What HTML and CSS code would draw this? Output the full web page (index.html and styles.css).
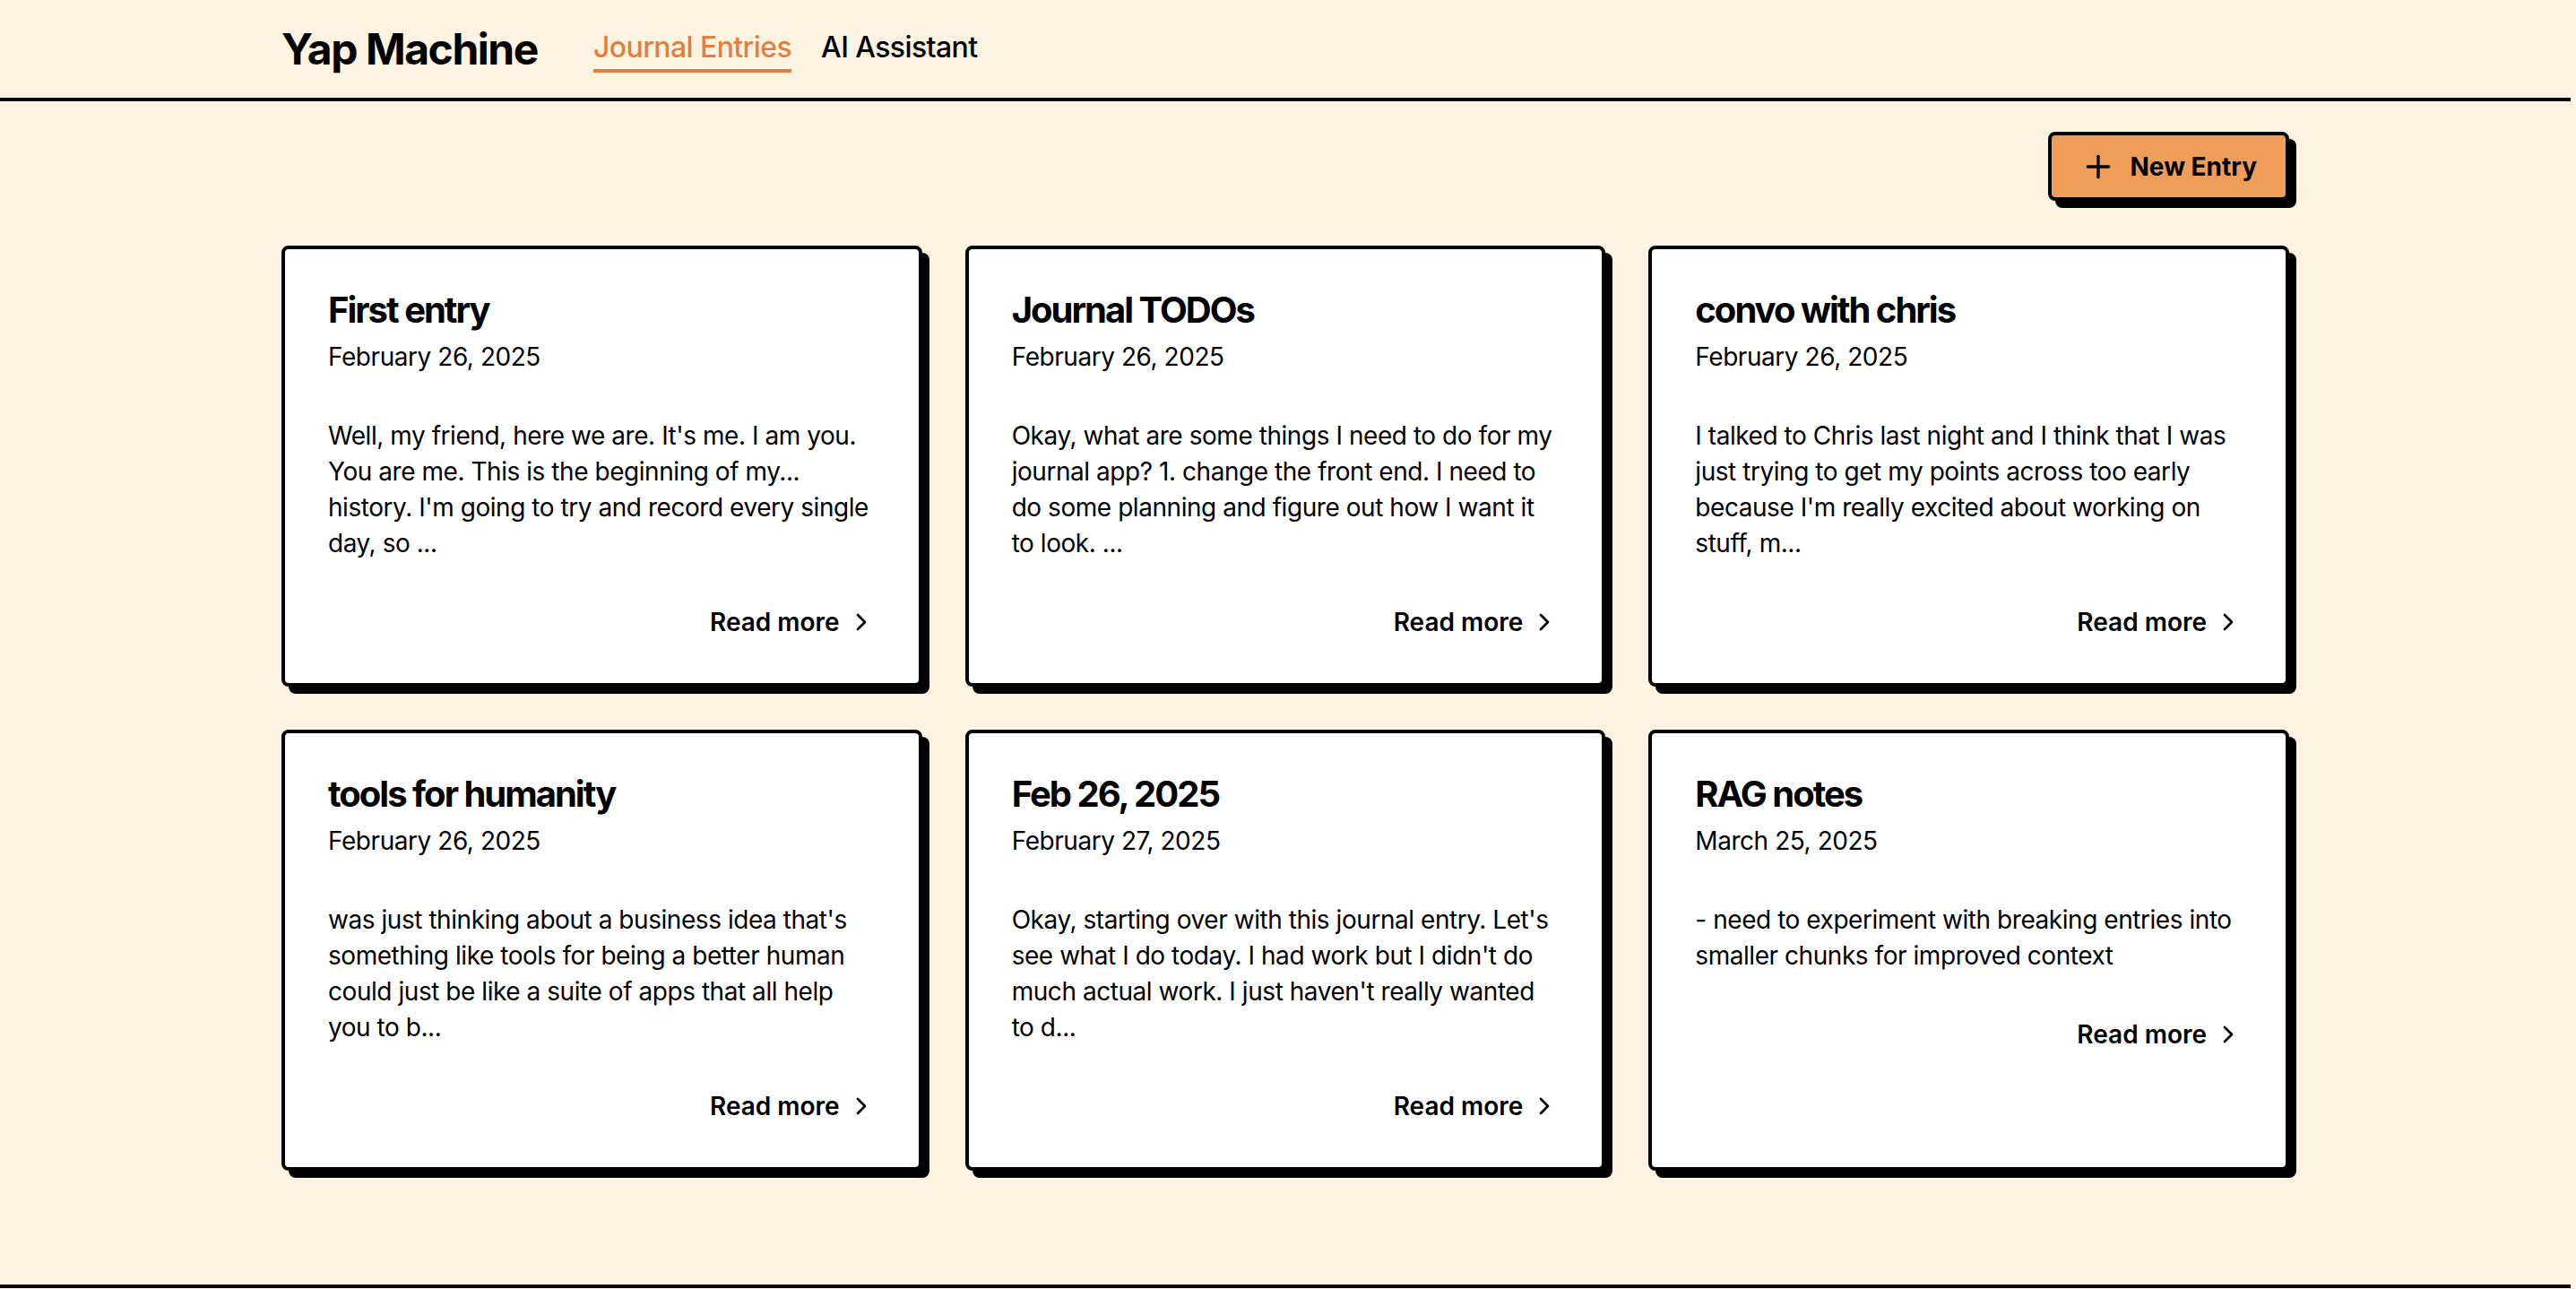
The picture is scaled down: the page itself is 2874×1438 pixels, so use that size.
FILE: index.html
```html
<!DOCTYPE html>
<html lang="en">
<head>
<meta charset="utf-8">
<title>Yap Machine</title>
<link rel="stylesheet" href="styles.css">
</head>
<body>
<header class="site-header">
  <div class="container header-inner">
    <a class="logo" href="#">Yap Machine</a>
    <nav class="nav">
      <a class="nav-link active" href="#">Journal Entries</a>
      <a class="nav-link" href="#">AI Assistant</a>
    </nav>
  </div>
</header>
<main class="main">
  <div class="container">
    <div class="toolbar">
      <button class="btn-new" type="button">
        <svg class="icon-plus" viewBox="0 0 24 24" fill="none" stroke="currentColor" stroke-width="2" stroke-linecap="round" stroke-linejoin="round"><path d="M5 12h14"/><path d="M12 5v14"/></svg>
        <span>New Entry</span>
      </button>
    </div>
    <div class="grid">
      <article class="card">
        <div class="card-header">
          <h3 class="card-title">First entry</h3>
          <p class="card-date">February 26, 2025</p>
        </div>
        <div class="card-content">Well, my friend, here we are. It's me. I am you. You are me. This is the beginning of my... history. I'm going to try and record every single day, so ...</div>
        <div class="card-footer"><a class="read-more" href="#">Read more<svg class="icon-chev" viewBox="0 0 24 24" fill="none" stroke="currentColor" stroke-width="2" stroke-linecap="round" stroke-linejoin="round"><path d="m9 18 6-6-6-6"/></svg></a></div>
      </article>
      <article class="card">
        <div class="card-header">
          <h3 class="card-title">Journal TODOs</h3>
          <p class="card-date">February 26, 2025</p>
        </div>
        <div class="card-content">Okay, what are some things I need to do for my journal app? 1. change the front end. I need to do some planning and figure out how I want it to look. ...</div>
        <div class="card-footer"><a class="read-more" href="#">Read more<svg class="icon-chev" viewBox="0 0 24 24" fill="none" stroke="currentColor" stroke-width="2" stroke-linecap="round" stroke-linejoin="round"><path d="m9 18 6-6-6-6"/></svg></a></div>
      </article>
      <article class="card">
        <div class="card-header">
          <h3 class="card-title">convo with chris</h3>
          <p class="card-date">February 26, 2025</p>
        </div>
        <div class="card-content">I talked to Chris last night and I think that I was just trying to get my points across too early because I'm really excited about working on stuff, m...</div>
        <div class="card-footer"><a class="read-more" href="#">Read more<svg class="icon-chev" viewBox="0 0 24 24" fill="none" stroke="currentColor" stroke-width="2" stroke-linecap="round" stroke-linejoin="round"><path d="m9 18 6-6-6-6"/></svg></a></div>
      </article>
      <article class="card">
        <div class="card-header">
          <h3 class="card-title">tools for humanity</h3>
          <p class="card-date">February 26, 2025</p>
        </div>
        <div class="card-content">was just thinking about a business idea that's something like tools for being a better human could just be like a suite of apps that all help you to b...</div>
        <div class="card-footer"><a class="read-more" href="#">Read more<svg class="icon-chev" viewBox="0 0 24 24" fill="none" stroke="currentColor" stroke-width="2" stroke-linecap="round" stroke-linejoin="round"><path d="m9 18 6-6-6-6"/></svg></a></div>
      </article>
      <article class="card">
        <div class="card-header">
          <h3 class="card-title">Feb 26, 2025</h3>
          <p class="card-date">February 27, 2025</p>
        </div>
        <div class="card-content">Okay, starting over with this journal entry. Let's see what I do today. I had work but I didn't do much actual work. I just haven't really wanted to d...</div>
        <div class="card-footer"><a class="read-more" href="#">Read more<svg class="icon-chev" viewBox="0 0 24 24" fill="none" stroke="currentColor" stroke-width="2" stroke-linecap="round" stroke-linejoin="round"><path d="m9 18 6-6-6-6"/></svg></a></div>
      </article>
      <article class="card">
        <div class="card-header">
          <h3 class="card-title">RAG notes</h3>
          <p class="card-date">March 25, 2025</p>
        </div>
        <div class="card-content">- need to experiment with breaking entries into smaller chunks for improved context</div>
        <div class="card-footer"><a class="read-more" href="#">Read more<svg class="icon-chev" viewBox="0 0 24 24" fill="none" stroke="currentColor" stroke-width="2" stroke-linecap="round" stroke-linejoin="round"><path d="m9 18 6-6-6-6"/></svg></a></div>
      </article>
    </div>
  </div>
</main>
<footer class="site-footer">
  <div class="container footer-inner"></div>
</footer>
</body>
</html>
```

FILE: styles.css
```css
* { box-sizing: border-box; }

html, body {
  margin: 0;
  padding: 0;
}

body {
  background: #fdf3e1;
  color: #000;
  font-family: "Inter", "Noto Sans", sans-serif;
  padding-right: 6px;
}

a { color: inherit; text-decoration: none; }

.container {
  max-width: 2304px;
  margin: 0 auto;
  padding: 0 32px;
}

.site-header {
  height: 113px;
  border-bottom: 4px solid #000;
}

.header-inner {
  height: 100%;
  display: flex;
  align-items: center;
}

.logo {
  font-size: 48px;
  line-height: 64px;
  font-weight: 700;
  letter-spacing: -1.45px;
}

.nav {
  display: flex;
  gap: 33px;
  margin-left: 62px;
}

.nav-link {
  font-size: 32px;
  line-height: 48px;
  font-weight: 500;
  letter-spacing: -0.6px;
  border-bottom: 4px solid transparent;
  margin-top: 1px;
}

.nav-link.active {
  color: #e07f3f;
  border-bottom-color: #e07f3f;
}

.main {
  min-height: calc(100vh - 118px);
  padding-top: 34px;
  padding-bottom: 64px;
}

.toolbar {
  display: flex;
  justify-content: flex-end;
  margin-bottom: 50px;
}

.btn-new {
  display: inline-flex;
  align-items: center;
  gap: 16px;
  height: 77px;
  padding: 0 32px;
  background: #f09d59;
  color: #000;
  border: 4px solid #000;
  border-radius: 8px;
  box-shadow: 8px 8px 0 #000;
  font-family: inherit;
  font-size: 28px;
  line-height: 40px;
  font-weight: 700;
  cursor: pointer;
}

.icon-plus {
  width: 40px;
  height: 40px;
  flex: none;
}

.grid {
  display: grid;
  grid-template-columns: repeat(3, 1fr);
  gap: 48px;
}

.card {
  background: #fff;
  border: 4px solid #000;
  border-radius: 8px;
  box-shadow: 8px 8px 0 #000;
}

.card-header {
  padding: 48px 48px 48px;
}

.card-title {
  margin: 0;
  font-size: 40px;
  line-height: 40px;
  font-weight: 700;
  letter-spacing: -2px;
}

.card-date {
  margin: 12px 0 0;
  font-size: 28px;
  line-height: 40px;
  letter-spacing: -0.45px;
}

.card-content {
  padding: 0 48px 48px;
  font-size: 28px;
  line-height: 40px;
  letter-spacing: -0.45px;
}

.card-footer {
  display: flex;
  justify-content: flex-end;
  padding: 0 48px 48px;
}

.read-more {
  display: inline-flex;
  align-items: center;
  gap: 8px;
  font-size: 28px;
  line-height: 40px;
  font-weight: 600;
}

.icon-chev {
  width: 32px;
  height: 32px;
  flex: none;
}

.site-footer {
  border-top: 4px solid #000;
}

.footer-inner {
  height: 120px;
}
```
